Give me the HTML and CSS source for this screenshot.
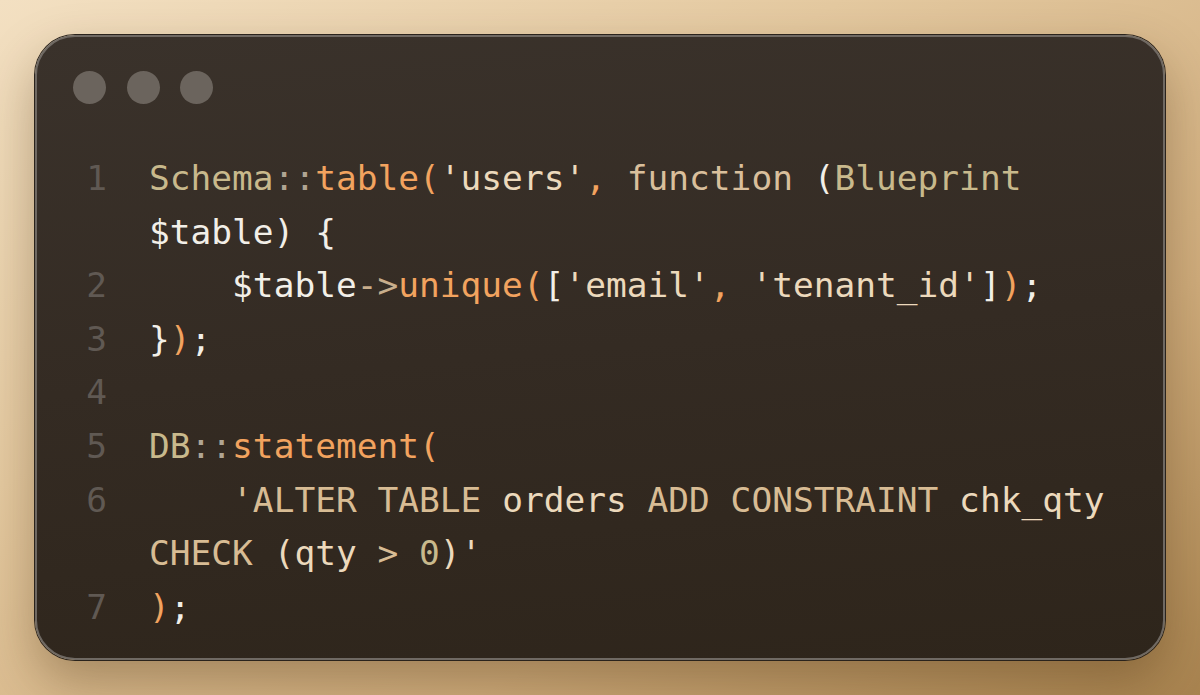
FILE: index.html
```html
<!DOCTYPE html>
<html lang="en">
<head>
<meta charset="utf-8">
<title>Code</title>
<link rel="stylesheet" href="styles.css">
</head>
<body>
<div class="window">
  <div class="titlebar">
    <span class="dot"></span><span class="dot"></span><span class="dot"></span>
  </div>
  <div class="code">
    <div class="line"><span class="num">1</span><span class="src"><span class="k">Schema</span><span class="op">::</span><span class="fn">table(</span><span class="s">'users'</span><span class="fn">,</span> <span class="kw">function</span> <span class="w">(</span><span class="k">Blueprint</span> <span class="w">$table) {</span></span></div>
    <div class="line"><span class="num">2</span><span class="src">    <span class="w">$table</span><span class="ar">-&gt;</span><span class="fn">unique(</span><span class="w">[</span><span class="s">'email'</span><span class="fn">,</span> <span class="s">'tenant_id'</span><span class="w">]</span><span class="fn">)</span><span class="w">;</span></span></div>
    <div class="line"><span class="num">3</span><span class="src"><span class="w">}</span><span class="fn">)</span><span class="w">;</span></span></div>
    <div class="line"><span class="num">4</span><span class="src"> </span></div>
    <div class="line"><span class="num">5</span><span class="src"><span class="k">DB</span><span class="op">::</span><span class="fn">statement(</span></span></div>
    <div class="line"><span class="num">6</span><span class="src">    <span class="sq">'ALTER TABLE</span> <span class="s">orders</span> <span class="sq">ADD CONSTRAINT</span> <span class="s">chk_qty</span> <span class="sq">CHECK</span> <span class="s">(qty</span> <span class="sq">&gt;</span> <span class="k">0</span><span class="s">)'</span></span></div>
    <div class="line"><span class="num">7</span><span class="src"><span class="fn">)</span><span class="w">;</span></span></div>
  </div>
</div>
</body>
</html>
```
FILE: styles.css
```css
* { box-sizing: border-box; }
html, body { margin: 0; height: 100%; }
body {
  width: 1200px;
  height: 695px;
  padding: 35px;
  overflow: hidden;
  background: linear-gradient(150deg, #f3e0c2 0%, #e4c9a0 35%, #cfac7c 70%, #a8834f 100%);
  font-family: "DejaVu Sans Mono", "Liberation Mono", monospace;
}
.window {
  width: 1130px;
  height: 625px;
  border-radius: 40px;
  border: 2px solid #6f6963;
  background: linear-gradient(175deg, #3a322b 0%, #342b23 50%, #2e251b 100%);
  box-shadow: 0 0 0 1px #2a231c, 0 22px 50px rgba(70, 42, 12, 0.35);
  padding: 34px 34px 0 36px;
}
.titlebar {
  display: flex;
  gap: 20.5px;
}
.dot {
  width: 33px;
  height: 33px;
  border-radius: 50%;
  background: #6b645d;
}
.code {
  margin-top: 48px;
  padding-left: 13px;
  font-size: 34.5px;
  line-height: 53.6px;
  color: #f2efe8;
}
.line {
  display: grid;
  grid-template-columns: 21px 1fr;
  column-gap: 42px;
}
.num {
  text-align: right;
  color: #605953;
}
.src {
  white-space: pre-wrap;
  width: 980px;
}
.k { color: #c8b98c; }
.op { color: #b0a593; }
.fn { color: #f2a35f; }
.s { color: #ecd9bc; }
.kw { color: #d9bf9c; }
.sq { color: #d8bc94; }
.w { color: #f2efe8; }
.ar { color: #c8ae8c; }
```
